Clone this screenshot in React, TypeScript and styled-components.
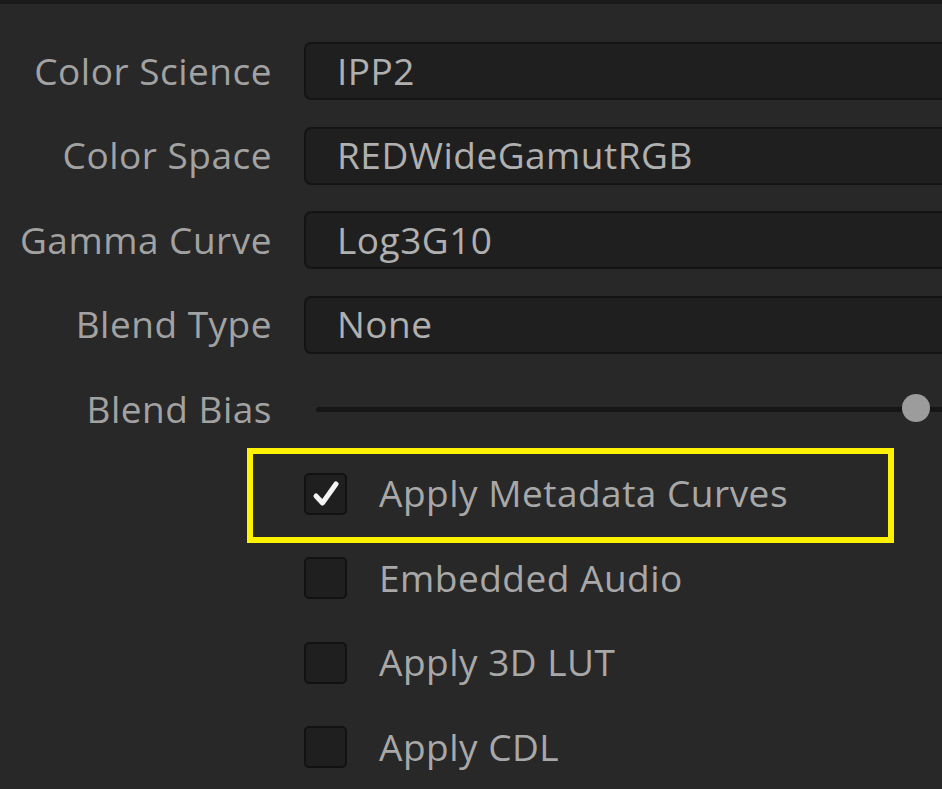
import React from "react";
import styled, { createGlobalStyle } from "styled-components";

const GlobalStyle = createGlobalStyle`
  html, body {
    margin: 0;
    padding: 0;
    background: #282828;
    overflow: hidden;
  }
  body {
    font-family: "Open Sans", "Noto Sans", sans-serif;
  }
`;

const Panel = styled.div`
  width: 942px;
  height: 789px;
  background: #282828;
  border-top: 4px solid #1a1a1a;
  box-sizing: border-box;
  overflow: hidden;
`;

const Form = styled.div`
  display: grid;
  grid-template-columns: 272px 1fr;
  grid-auto-rows: 58px;
  column-gap: 32px;
  row-gap: 26.5px;
  padding-top: 38px;
  margin-right: -20px;
`;

const Label = styled.div`
  display: flex;
  align-items: center;
  justify-content: flex-end;
  padding-bottom: 2px;
  color: #a2a2a2;
  font-size: 37px;
  letter-spacing: 0.5px;
  white-space: nowrap;
`;

const Field = styled.div`
  display: flex;
  align-items: center;
  padding: 0 0 2px 31px;
  background: #1f1f1f;
  border: 2px solid #141414;
  border-right: none;
  border-radius: 7px 0 0 7px;
  color: #b0b0b0;
  font-size: 37px;
  letter-spacing: 0.5px;
`;

const SliderCell = styled.div`
  position: relative;
  display: flex;
  align-items: center;
  padding-left: 12px;
`;

const Track = styled.div`
  height: 5px;
  flex: 1;
  background: #161616;
  border-radius: 3px;
`;

const Thumb = styled.div<{ left: number }>`
  position: absolute;
  left: ${(p) => p.left}px;
  top: 50%;
  width: 28px;
  height: 28px;
  margin-top: -15px;
  border-radius: 50%;
  background: #9c9c9c;
`;

const CheckRow = styled.label`
  grid-column: 2;
  position: relative;
  display: flex;
  align-items: center;
  gap: 32px;
  color: #a8a8a8;
  font-size: 37px;
  letter-spacing: 0.5px;
  white-space: nowrap;
`;

const Box = styled.span`
  width: 39px;
  height: 38px;
  flex: none;
  display: flex;
  align-items: center;
  justify-content: center;
  background: #1f1f1f;
  border: 2px solid #121212;
  border-radius: 5px;
`;

const CheckText = styled.span`
  padding-bottom: 2px;
`;

const Highlight = styled.div`
  position: absolute;
  left: -57px;
  top: -17px;
  width: 647px;
  height: 95px;
  box-sizing: border-box;
  border: 6px solid #fff200;
  pointer-events: none;
`;

const fields = [
  { label: "Color Science", value: "IPP2" },
  { label: "Color Space", value: "REDWideGamutRGB" },
  { label: "Gamma Curve", value: "Log3G10" },
  { label: "Blend Type", value: "None" },
];

const checks = [
  { label: "Apply Metadata Curves", checked: true },
  { label: "Embedded Audio", checked: false },
  { label: "Apply 3D LUT", checked: false },
  { label: "Apply CDL", checked: false },
];

const CheckMark = () => (
  <svg width="30" height="30" viewBox="0 0 30 30">
    <path
      d="M5 17 L11.5 24 L25 5"
      fill="none"
      stroke="#f4f4f4"
      strokeWidth="5"
      strokeLinecap="round"
      strokeLinejoin="round"
    />
  </svg>
);

export default function App() {
  return (
    <Panel>
      <GlobalStyle />
      <Form>
        {fields.map((f) => (
          <React.Fragment key={f.label}>
            <Label>{f.label}</Label>
            <Field>{f.value}</Field>
          </React.Fragment>
        ))}
        <Label>Blend Bias</Label>
        <SliderCell>
          <Track />
          <Thumb left={598} />
        </SliderCell>
        {checks.map((c, i) => (
          <CheckRow key={c.label}>
            <Box>{c.checked && <CheckMark />}</Box>
            <CheckText>{c.label}</CheckText>
            {i === 0 && <Highlight />}
          </CheckRow>
        ))}
      </Form>
    </Panel>
  );
}
